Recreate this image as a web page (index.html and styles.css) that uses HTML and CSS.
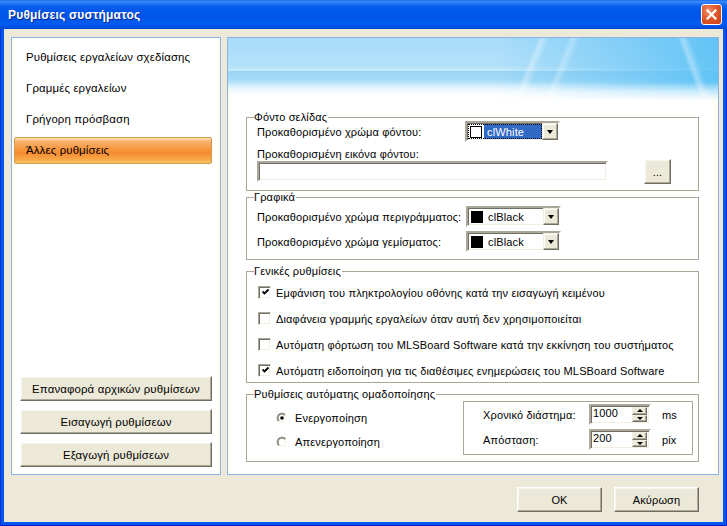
FILE: index.html
```html
<!DOCTYPE html>
<html>
<head>
<meta charset="utf-8">
<title>Ρυθμίσεις συστήματος</title>
<link rel="stylesheet" href="styles.css">
</head>
<body>
<div class="window">
  <div class="titlebar">
    <span class="title">Ρυθμίσεις συστήματος</span>
    <span class="close"><svg width="11" height="11" viewBox="0 0 11 11"><path d="M1.5 1.5 L9.5 9.5 M9.5 1.5 L1.5 9.5" stroke="#fff" stroke-width="2.2" stroke-linecap="square"/></svg></span>
  </div>
  <div class="frame">
    <div class="client">
      <div class="main">
        <div class="nav">
          <div class="nav-item">Ρυθμίσεις εργαλείων σχεδίασης</div>
          <div class="nav-item">Γραμμές εργαλείων</div>
          <div class="nav-item">Γρήγορη πρόσβαση</div>
          <div class="nav-item active">Άλλες ρυθμίσεις</div>
          <div class="nav-actions">
            <button class="btn nav-btn">Επαναφορά αρχικών ρυθμίσεων</button>
            <button class="btn nav-btn">Εισαγωγή ρυθμίσεων</button>
            <button class="btn nav-btn">Εξαγωγή ρυθμίσεων</button>
          </div>
        </div>
        <div class="page">
          <div class="banner"></div>

          <div class="group g1">
            <span class="legend">Φόντο σελίδας</span>
            <div class="row">
              <span class="lbl lbl1">Προκαθορισμένο χρώμα φόντου:</span>
              <span class="combo focus">
                <span class="combo-value sel"><span class="swatch white"></span><span class="combo-text">clWhite</span></span>
                <span class="drop"><span class="tri"></span></span>
              </span>
            </div>
            <div class="line">Προκαθορισμένη εικόνα φόντου:</div>
            <div class="row row-file">
              <span class="edit wide-edit"></span>
              <button class="btn dots">...</button>
            </div>
          </div>

          <div class="group g2">
            <span class="legend">Γραφικά</span>
            <div class="row">
              <span class="lbl lbl2">Προκαθορισμένο χρώμα περιγράμματος:</span>
              <span class="combo">
                <span class="combo-value"><span class="swatch"></span><span class="combo-text">clBlack</span></span>
                <span class="drop"><span class="tri"></span></span>
              </span>
            </div>
            <div class="row">
              <span class="lbl lbl2">Προκαθορισμένο χρώμα γεμίσματος:</span>
              <span class="combo">
                <span class="combo-value"><span class="swatch"></span><span class="combo-text">clBlack</span></span>
                <span class="drop"><span class="tri"></span></span>
              </span>
            </div>
          </div>

          <div class="group g3">
            <span class="legend">Γενικές ρυθμίσεις</span>
            <div class="check"><span class="cb"><svg width="9" height="9" viewBox="0 0 9 9"><path d="M1.5 3.5 L3.5 5.5 L7.5 1.5" fill="none" stroke="#000" stroke-width="1.8"/></svg></span>Εμφάνιση του πληκτρολογίου οθόνης κατά την εισαγωγή κειμένου</div>
            <div class="check"><span class="cb"></span>Διαφάνεια γραμμής εργαλείων όταν αυτή δεν χρησιμοποιείται</div>
            <div class="check"><span class="cb"></span>Αυτόματη φόρτωση του MLSBoard Software κατά την εκκίνηση του συστήματος</div>
            <div class="check"><span class="cb"><svg width="9" height="9" viewBox="0 0 9 9"><path d="M1.5 3.5 L3.5 5.5 L7.5 1.5" fill="none" stroke="#000" stroke-width="1.8"/></svg></span>Αυτόματη ειδοποίηση για τις διαθέσιμες ενημερώσεις του MLSBoard Software</div>
          </div>

          <div class="group g4">
            <span class="legend">Ρυθμίσεις αυτόματης ομαδοποίησης</span>
            <div class="radios">
              <div class="radio"><svg width="12" height="12" viewBox="0 0 12 12"><defs><linearGradient id="ro1" x1="0" y1="0" x2="1" y2="1"><stop offset="0.5" stop-color="#aca899"/><stop offset="0.5" stop-color="#fff"/></linearGradient><linearGradient id="ri1" x1="0" y1="0" x2="1" y2="1"><stop offset="0.5" stop-color="#716f64"/><stop offset="0.5" stop-color="#f1efe2"/></linearGradient></defs><circle cx="6" cy="6" r="5.5" fill="url(#ro1)"/><circle cx="6" cy="6" r="4.5" fill="url(#ri1)"/><circle cx="6" cy="6" r="3.5" fill="#fff"/><circle cx="6" cy="6" r="1.8" fill="#000"/></svg>Ενεργοποίηση</div>
              <div class="radio"><svg width="12" height="12" viewBox="0 0 12 12"><defs><linearGradient id="ro2" x1="0" y1="0" x2="1" y2="1"><stop offset="0.5" stop-color="#aca899"/><stop offset="0.5" stop-color="#fff"/></linearGradient><linearGradient id="ri2" x1="0" y1="0" x2="1" y2="1"><stop offset="0.5" stop-color="#716f64"/><stop offset="0.5" stop-color="#f1efe2"/></linearGradient></defs><circle cx="6" cy="6" r="5.5" fill="url(#ro2)"/><circle cx="6" cy="6" r="4.5" fill="url(#ri2)"/><circle cx="6" cy="6" r="3.5" fill="#fff"/></svg>Απενεργοποίηση</div>
            </div>
            <div class="inner">
              <div class="row spinrow">
                <span class="lbl lbl3">Χρονικό διάστημα:</span>
                <span class="spin"><span class="spin-text">1000</span><span class="spin-btns"><span class="sb"><span class="up"></span></span><span class="sb"><span class="down"></span></span></span></span>
                <span class="unit">ms</span>
              </div>
              <div class="row spinrow">
                <span class="lbl lbl3">Απόσταση:</span>
                <span class="spin"><span class="spin-text">200</span><span class="spin-btns"><span class="sb"><span class="up"></span></span><span class="sb"><span class="down"></span></span></span></span>
                <span class="unit">pix</span>
              </div>
            </div>
          </div>
        </div>
      </div>
      <div class="footer">
        <button class="btn foot-btn">OK</button>
        <button class="btn foot-btn">Ακύρωση</button>
      </div>
    </div>
  </div>
</div>
</body>
</html>
```

FILE: styles.css
```css
* { box-sizing: border-box; }
html, body { margin: 0; padding: 0; }
body {
  width: 727px; height: 526px; overflow: hidden;
  font-family: "Liberation Sans", Arial, sans-serif;
  font-size: 11px; letter-spacing: 0.15px; color: #000; background: #0055ea;
}
.window { width: 727px; height: 526px; display: flex; flex-direction: column; }

.titlebar {
  height: 29px; flex: none;
  display: flex; align-items: center; justify-content: space-between;
  padding: 0 5px 0 8px;
  background: linear-gradient(to bottom, #0a5ae6 0, #3d8cfb 1px, #2a7bf8 3px, #0c60ee 6px, #0058ec 10px, #0055e8 18px, #005cf2 24px, #0050e2 27px, #0043d3 29px);
}
.title {
  color: #fff; font-weight: bold; font-size: 12px;
  font-family: "Liberation Sans", Arial, sans-serif;
  text-shadow: 1px 1px 0 #0a2a8a;
  letter-spacing: 0.2px;
}
.close {
  width: 21px; height: 21px; border: 1px solid #fff; border-radius: 3px;
  background: radial-gradient(circle at 35% 30%, #f0906a 0, #e0582c 45%, #c73d14 100%);
  display: flex; align-items: center; justify-content: center;
}

.frame {
  flex: 1; display: flex; padding: 0 4px 4px 4px;
  background: #0055ea;
  box-shadow: inset 1px 0 #0831d9, inset -1px 0 #0831d9, inset 0 -1px #0019cf;
}
.client {
  flex: 1; background: #ece9d8;
  display: flex; flex-direction: column;
  padding: 8px 4px 0 7px;
}
.main { display: flex; gap: 6px; height: 438px; }

.nav {
  width: 210px; flex: none; background: #fff; border: 1px solid #8db2e3;
  display: flex; flex-direction: column;
  padding: 6px 8px 7px 2px;
}
.nav-item {
  height: 27px; line-height: 27px; padding-left: 12px; margin-bottom: 4px;
  white-space: nowrap; font-size: 11.4px;
}
.nav-item.active {
  border: 1px solid #d09a4e; border-radius: 2px;
  line-height: 25px; padding-left: 11px;
  background: linear-gradient(to bottom, #fde1b8 0, #f9b06a 15%, #f7963e 45%, #f68b30 60%, #f9a748 85%, #fbc464 100%);
}
.nav-actions {
  margin-top: auto; display: flex; flex-direction: column; gap: 8px;
  padding-left: 6px;
}

.btn {
  font-family: "Liberation Sans", Arial, sans-serif; font-size: 11px; letter-spacing: 0.15px; color: #000;
  background: #ece9d8; height: 25px; padding: 0; margin: 0;
  border: 1px solid; border-color: #fff #716f64 #716f64 #fff;
  box-shadow: inset -1px -1px #aca899, inset 1px 1px #f6f5ee;
  display: flex; align-items: center; justify-content: center;
}
.nav-btn { width: 192px; font-size: 11.4px; }

.page {
  width: 492px; flex: none; background: #fff; border: 1px solid #8db2e3;
  display: flex; flex-direction: column;
}
.banner {
  height: 63px; flex: none;
  background:
    linear-gradient(112deg, transparent 0, transparent 60%, rgba(255,255,255,0.35) 61%, transparent 62.5%, transparent 66%, rgba(255,255,255,0.28) 67%, transparent 68.5%, transparent 100%),
    linear-gradient(70deg, transparent 0, transparent 92%, rgba(255,255,255,0.35) 93%, transparent 94.5%),
    linear-gradient(to bottom, rgba(255,255,255,0) 0, rgba(255,255,255,0) 70%, rgba(255,255,255,0.6) 85%, #fff 100%),
    linear-gradient(to right, rgba(110,200,245,0) 0, rgba(110,200,245,0) 55%, rgba(100,195,245,0.55) 80%, rgba(80,190,245,0.8) 100%),
    linear-gradient(to bottom, #a6dbf9 0, #b4e1fa 44%, #bfe6fb 49%, #d3eefc 51%, #9bd5f5 53%, #a6daf7 66%, #c8eafb 76%, #eef8fe 89%, #ffffff 100%);
}

.group {
  position: relative;
  margin: 0 19px 0 18px;
  border: 1px solid #aca899;
}
.legend {
  position: absolute; top: -7px; left: 7px;
  background: #fff; line-height: 13px; padding-right: 1px; white-space: nowrap;
}
.row { display: flex; align-items: center; height: 21px; }
.lbl { flex: none; white-space: nowrap; }

.g1 { margin-top: 16px; padding: 3px 0 6px 10px; }
.lbl1 { width: 208px; }
.line { margin-top: 6px; line-height: 13px; height: 13px; }
.row-file { margin-top: -2px; height: 25px; }
.edit {
  height: 21px; background: #fff;
  border: 2px solid; border-color: #aca899 #fff #fff #aca899;
  box-shadow: inset 1px 1px #716f64, inset -1px -1px #f1efe2;
}
.wide-edit { width: 351px; }
.dots { width: 27px; margin-left: 36px; }

.g2 { margin-top: 6px; padding: 8px 0 7px 10px; display: flex; flex-direction: column; gap: 4px; }
.lbl2 { width: 209px; }

.combo {
  width: 95px; height: 21px; flex: none; display: flex; background: #fff;
  border: 2px solid; border-color: #aca899 #fff #fff #aca899;
  box-shadow: inset 1px 1px #716f64, inset -1px -1px #f1efe2;
  padding: 1px 1px 1px 1px;
}
.combo-value { flex: 1; display: flex; align-items: center; padding-left: 2px; }
.swatch { width: 12px; height: 12px; background: #000; border: 1px solid #000; flex: none; }
.swatch.white { background: #fff; }
.combo-text { margin-left: 5px; }
.combo-value.sel {
  outline: 1px dotted #000; outline-offset: -1px;
  background: linear-gradient(to right, transparent 0, transparent 16px, #316ac5 16px);
  color: #fff;
}
.drop {
  width: 16px; height: 17px; margin: -1px -1px -1px 0; flex: none;
  background: #ece9d8;
  border: 1px solid; border-color: #f1efe2 #716f64 #716f64 #f1efe2;
  box-shadow: inset -1px -1px #aca899, inset 1px 1px #fff;
  display: flex; align-items: center; justify-content: center;
}
.tri { width: 0; height: 0; border-left: 3.5px solid transparent; border-right: 3.5px solid transparent; border-top: 4px solid #000; margin-top: 1px; }

.g3 { margin-top: 11px; padding: 14px 0 5px 11px; display: flex; flex-direction: column; gap: 13px; }
.check { display: flex; align-items: center; height: 13px; white-space: nowrap; }
.cb {
  width: 13px; height: 13px; flex: none; margin-right: 5px; background: #fff;
  border: 1px solid; border-color: #aca899 #fff #fff #aca899;
  box-shadow: inset 1px 1px #716f64, inset -1px -1px #f1efe2;
  display: flex; align-items: center; justify-content: center;
}
.cb svg { display: block; margin-left: 1px; margin-top: 0; }

.g4 { margin-top: 11px; padding: 0 0 6px 0; display: flex; }
.radios { flex: 1; padding: 17px 0 0 29px; display: flex; flex-direction: column; gap: 12px; }
.radio { display: flex; align-items: center; height: 12px; white-space: nowrap; }
.radio svg { flex: none; margin-right: 7px; }
.inner {
  width: 230px; height: 54px; flex: none; margin: 6px 5px 0 0;
  border: 1px solid #aca899;
  padding: 2px 0 0 19px;
  display: flex; flex-direction: column; gap: 4px;
}
.lbl3 { width: 106px; }
.spin {
  width: 62px; height: 21px; flex: none; display: flex; background: #fff;
  border: 2px solid; border-color: #aca899 #fff #fff #aca899;
  box-shadow: inset 1px 1px #716f64, inset -1px -1px #f1efe2;
  padding: 1px 2px 1px 1px;
}
.spin-text { flex: 1; line-height: 13px; padding-left: 1px; }
.spin-btns { width: 15px; display: flex; flex-direction: column; }
.sb {
  flex: 1; background: #ece9d8;
  border: 1px solid; border-color: #f1efe2 #716f64 #716f64 #f1efe2;
  box-shadow: inset -1px -1px #aca899;
  display: flex; align-items: center; justify-content: center;
}
.up { width: 0; height: 0; border-left: 3px solid transparent; border-right: 3px solid transparent; border-bottom: 3px solid #000; }
.down { width: 0; height: 0; border-left: 3px solid transparent; border-right: 3px solid transparent; border-top: 3px solid #000; }
.unit { margin-left: 11px; }

.footer {
  display: flex; justify-content: flex-end; gap: 12px;
  padding: 12px 20px 0 0;
}
.foot-btn { width: 85px; }
```
